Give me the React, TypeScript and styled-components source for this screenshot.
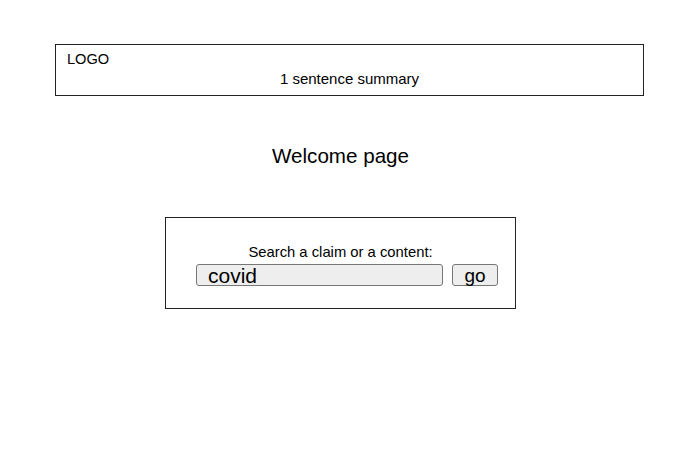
import React from "react";
import styled, { createGlobalStyle } from "styled-components";

const Global = createGlobalStyle`
  html, body { margin: 0; padding: 0; background: #fff; }
  body { font-family: "Liberation Sans", Arial, sans-serif; color: #000; }
`;

const Page = styled.div`
  width: 700px;
  height: 476px;
  padding-top: 44px;
  box-sizing: border-box;
`;

const Header = styled.header`
  margin-left: 55px;
  width: 589px;
  height: 52px;
  box-sizing: border-box;
  border: 1px solid #222;
  padding: 6px 11px 0;
  display: flex;
  flex-direction: column;
`;

const Logo = styled.div`
  font-size: 14.6px;
  line-height: 16px;
`;

const Summary = styled.div`
  font-size: 15px;
  line-height: 17px;
  text-align: center;
  margin-top: 3px;
`;

const Title = styled.h1`
  margin: 48px 0 0;
  width: 681px;
  text-align: center;
  font-size: 20.6px;
  font-weight: normal;
  line-height: 24px;
`;

const SearchCard = styled.form`
  margin: 49px 0 0 165px;
  width: 351px;
  height: 92px;
  box-sizing: border-box;
  border: 1px solid #222;
  display: flex;
  flex-direction: column;
  align-items: center;
  padding-top: 26px;
`;

const Label = styled.label`
  font-size: 14.8px;
  line-height: 17px;
`;

const Row = styled.div`
  display: flex;
  gap: 9px;
  margin-top: 3px;
  padding-left: 13px;
`;

const Input = styled.input`
  width: 247px;
  height: 22px;
  box-sizing: border-box;
  border: 1px solid #777;
  border-radius: 3px;
  background: #eee;
  font-family: "Liberation Sans", Arial, sans-serif;
  font-size: 21px;
  padding: 2px 11px 0;
  color: #000;
  outline: none;
`;

const Button = styled.button`
  width: 46px;
  height: 22px;
  box-sizing: border-box;
  border: 1px solid #777;
  border-radius: 3px;
  background: #eee;
  font-family: "Liberation Sans", Arial, sans-serif;
  font-size: 19px;
  line-height: 18px;
  padding: 1px 0 0;
  color: #000;
`;

export default function App() {
  return (
    <>
      <Global />
      <Page>
        <Header>
          <Logo>LOGO</Logo>
          <Summary>1 sentence summary</Summary>
        </Header>
        <Title>Welcome page</Title>
        <SearchCard onSubmit={(e) => e.preventDefault()}>
          <Label htmlFor="q">Search a claim or a content:</Label>
          <Row>
            <Input id="q" defaultValue="covid" />
            <Button type="submit">go</Button>
          </Row>
        </SearchCard>
      </Page>
    </>
  );
}
